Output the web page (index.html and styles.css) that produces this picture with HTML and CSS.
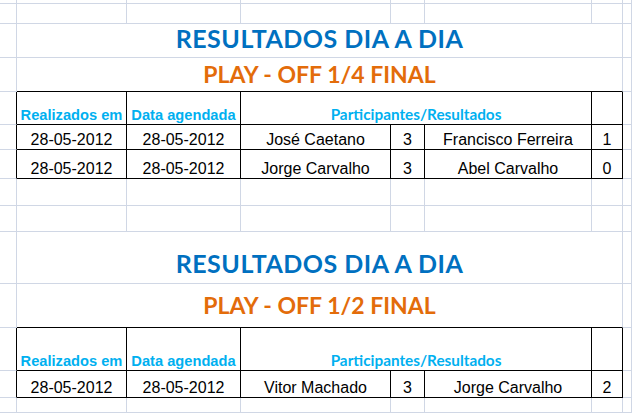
FILE: index.html
```html
<!DOCTYPE html>
<html lang="pt">
<head>
<meta charset="utf-8">
<title>Resultados dia a dia</title>
<link rel="stylesheet" href="styles.css">
</head>
<body>
<div class="sheet">
  <!-- row 1 -->
  <div class="c"></div><div class="c"></div><div class="c"></div><div class="c"></div><div class="c"></div><div class="c"></div><div class="c"></div><div class="c"></div>
  <!-- row 2 -->
  <div class="c"></div><div class="c"></div><div class="c"></div><div class="c"></div><div class="c"></div><div class="c"></div><div class="c"></div><div class="c"></div>
  <!-- row 3 -->
  <div class="c"></div><div class="c title t1">RESULTADOS DIA A DIA</div><div class="c"></div>
  <!-- row 4 -->
  <div class="c"></div><div class="c subtitle s1 edge-b">PLAY - OFF 1/4 FINAL</div><div class="c"></div>
  <!-- row 5 header -->
  <div class="c edge-r"></div>
  <div class="c t hdr">Realizados em</div>
  <div class="c t hdr">Data agendada</div>
  <div class="c t hdr part">Participantes/Resultados</div>
  <div class="c t"></div>
  <div class="c"></div>
  <!-- row 6 -->
  <div class="c edge-r"></div>
  <div class="c t d">28-05-2012</div>
  <div class="c t d">28-05-2012</div>
  <div class="c t d">José Caetano</div>
  <div class="c t d">3</div>
  <div class="c t d">Francisco Ferreira</div>
  <div class="c t d">1</div>
  <div class="c"></div>
  <!-- row 7 -->
  <div class="c edge-r"></div>
  <div class="c t d">28-05-2012</div>
  <div class="c t d">28-05-2012</div>
  <div class="c t d">Jorge Carvalho</div>
  <div class="c t d">3</div>
  <div class="c t d">Abel Carvalho</div>
  <div class="c t d">0</div>
  <div class="c"></div>
  <!-- row 8 -->
  <div class="c"></div><div class="c"></div><div class="c"></div><div class="c"></div><div class="c"></div><div class="c"></div><div class="c"></div><div class="c"></div>
  <!-- row 9 -->
  <div class="c"></div><div class="c"></div><div class="c"></div><div class="c"></div><div class="c"></div><div class="c"></div><div class="c"></div><div class="c"></div>
  <!-- row 10 -->
  <div class="c"></div><div class="c title t2">RESULTADOS DIA A DIA</div><div class="c"></div>
  <!-- row 11 -->
  <div class="c"></div><div class="c subtitle s2 edge-b">PLAY - OFF 1/2 FINAL</div><div class="c"></div>
  <!-- row 12 header -->
  <div class="c edge-r"></div>
  <div class="c t hdr">Realizados em</div>
  <div class="c t hdr">Data agendada</div>
  <div class="c t hdr part">Participantes/Resultados</div>
  <div class="c t"></div>
  <div class="c"></div>
  <!-- row 13 -->
  <div class="c edge-r"></div>
  <div class="c t d">28-05-2012</div>
  <div class="c t d">28-05-2012</div>
  <div class="c t d">Vitor Machado</div>
  <div class="c t d">3</div>
  <div class="c t d">Jorge Carvalho</div>
  <div class="c t d">2</div>
  <div class="c"></div>
  <!-- row 14 -->
  <div class="c"></div><div class="c"></div><div class="c"></div><div class="c"></div><div class="c"></div><div class="c"></div><div class="c"></div><div class="c"></div>
</div>
</body>
</html>
```

FILE: styles.css
```css
html, body {
  margin: 0;
  padding: 0;
  background: #ffffff;
  overflow: hidden;
}

.sheet {
  display: grid;
  width: 632px;
  height: 413px;
  overflow: hidden;
  grid-template-columns: 17px 110px 114px 150px 34px 167px 31px 9px;
  grid-template-rows: 4px 20px 34px 34px 33px 25px 29px 27px 26px 52px 44px 43px 27px 15px;
  font-family: "Liberation Sans", Arial, sans-serif;
  color: #000000;
}

.c {
  box-sizing: border-box;
  border-right: 1px solid #d0d7e5;
  border-bottom: 1px solid #d0d7e5;
  display: flex;
  align-items: flex-end;
  justify-content: center;
  white-space: nowrap;
}

.edge-r {
  border-right-color: #000000;
}

.edge-b {
  border-bottom-color: #000000;
}

.t {
  border-right-color: #000000;
  border-bottom-color: #000000;
}

.title,
.subtitle {
  grid-column: span 6;
  border-right-color: #d0d7e5;
  font-family: Lato, "Open Sans", sans-serif;
  font-weight: 700;
  line-height: normal;
}

.title {
  color: #0070c0;
  font-size: 25px;
  letter-spacing: 0.5px;
}

.subtitle {
  color: #e36c0a;
  font-size: 23px;
}

.subtitle.edge-b {
  border-bottom-color: #000000;
}

.t1 { padding-bottom: 4px; }
.s1 { padding-bottom: 3px; }
.t2 { padding-bottom: 5px; }
.s2 { padding-bottom: 8px; }

.hdr {
  color: #00b0f0;
  font-weight: 700;
  font-size: 14.67px;
  line-height: normal;
  padding-bottom: 1px;
}

.part {
  grid-column: span 3;
  font-family: Lato, "Open Sans", sans-serif;
  font-size: 15.3px;
}

.d {
  font-size: 16px;
  line-height: normal;
}
```
